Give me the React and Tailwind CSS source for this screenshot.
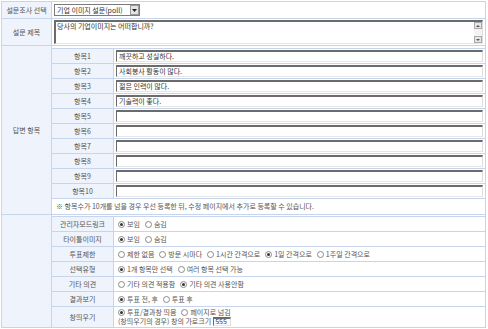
import React from 'react';

const items = [
  '깨끗하고 성실하다.',
  '사회봉사 활동이 많다.',
  '젊은 인력이 많다.',
  '기술력이 좋다.',
  '', '', '', '', '', '',
];

function Radio({ on }) {
  return (
    <span className="inline-flex items-center justify-center w-[7px] h-[7px] rounded-full border border-[#8a8a8a] bg-white mr-[2px] shrink-0">
      {on && <span className="w-[3px] h-[3px] rounded-full bg-[#333]" />}
    </span>
  );
}

function Choice({ on, label }) {
  return (
    <span className="inline-flex items-center mr-[5px]">
      <Radio on={on} />
      {label}
    </span>
  );
}

function TextBox({ value }) {
  return (
    <div className="h-[12px] flex-1 border-t-2 border-l border-[#6b6b6b] border-r border-r-[#ddd] border-b border-b-[#e6e6e6] bg-white flex items-center pl-[2px] text-[#333] leading-none">
      {value}
    </div>
  );
}

const options = [
  { label: '관리자모드링크', choices: [['보임', true], ['숨김', false]] },
  { label: '타이틀이미지', choices: [['보임', true], ['숨김', false]] },
  {
    label: '투표제한',
    choices: [['제한 없음', false], ['방문 시마다', false], ['1시간 간격으로', false], ['1일 간격으로', true], ['1주일 간격으로', false]],
  },
  { label: '선택유형', choices: [['1개 항목만 선택', true], ['여러 항목 선택 가능', false]] },
  { label: '기타 의견', choices: [['기타 의견 적용함', false], ['기타 의견 사용안함', true]] },
  { label: '결과보기', choices: [['투표 전, 후', true], ['투표 후', false]] },
];

export default function App() {
  return (
    <div className="w-[488px] h-[329px] bg-white pt-[1px] pl-[1px]" style={{ fontFamily: '"Noto Sans CJK KR", "Noto Sans", sans-serif' }}>
      <div className="w-[485px] border border-[#c6d4ec] text-[7px] text-[#555] leading-none">
        {/* 설문조사 선택 */}
        <div className="flex h-[17px] border-b border-[#c6d4ec]">
          <div className="w-[50px] bg-[#eef3fc] border-r border-[#c6d4ec] flex items-center justify-center">설문조사 선택</div>
          <div className="flex-1 flex items-center pl-[2px]">
            <div className="w-[86px] h-[12px] border border-[#7b7b7b] bg-white flex items-center justify-between pl-[2px] text-[#333]">
              <span>기업 이미지 설문(poll)</span>
              <span className="w-[9px] h-[10px] bg-[#e4e4e4] border border-[#999] flex items-center justify-center">
                <svg width="5" height="3" viewBox="0 0 5 3"><path d="M0 0h5L2.5 3z" fill="#222" /></svg>
              </span>
            </div>
          </div>
        </div>

        {/* 설문 제목 */}
        <div className="flex h-[27px] border-b border-[#c6d4ec]">
          <div className="w-[50px] bg-[#eef3fc] border-r border-[#c6d4ec] flex items-center justify-center">설문 제목</div>
          <div className="flex-1 flex items-center pl-[2px] pr-[2px]">
            <div className="flex-1 h-[24px] border-t-2 border-l-2 border-[#6b6b6b] border-r border-r-[#ddd] border-b border-b-[#e6e6e6] bg-white flex justify-between">
              <span className="pl-[1px] pt-[1px] text-[#333]">당사의 기업이미지는 어떠합니까?</span>
              <span className="w-[8px] bg-[#f3f3f3] flex flex-col justify-between">
                <span className="h-[7px] border border-[#aaa] bg-[#e6e6e6] flex items-center justify-center">
                  <svg width="4" height="2" viewBox="0 0 4 2"><path d="M0 2h4L2 0z" fill="#555" /></svg>
                </span>
                <span className="h-[7px] border border-[#aaa] bg-[#e6e6e6] flex items-center justify-center">
                  <svg width="4" height="2" viewBox="0 0 4 2"><path d="M0 0h4L2 2z" fill="#555" /></svg>
                </span>
              </span>
            </div>
          </div>
        </div>

        {/* 답변 항목 */}
        <div className="flex border-b border-[#c6d4ec]">
          <div className="w-[50px] bg-[#eef3fc] border-r border-[#c6d4ec] flex items-center justify-center">답변 항목</div>
          <div className="flex-1 pt-[2px]">
            <div className="border-t border-[#c6d4ec]">
              {items.map((v, i) => (
                <div key={i} className="flex h-[15px] border-b border-[#c6d4ec]">
                  <div className="w-[62px] bg-[#eef3fc] border-r border-[#c6d4ec] flex items-center justify-center">항목{i + 1}</div>
                  <div className="flex-1 flex items-center pl-[2px] pr-[2px]">
                    <TextBox value={v} />
                  </div>
                </div>
              ))}
              <div className="h-[15px] flex items-center pl-[4px]">
                ※ 항목수가 10개를 넘을 경우 우선 등록한 뒤, 수정 페이지에서 추가로 등록할 수 있습니다.
              </div>
            </div>
          </div>
        </div>

        {/* 옵션 */}
        <div className="flex">
          <div className="w-[50px] bg-[#eef3fc] border-r border-[#c6d4ec]" />
          <div className="flex-1 pt-[1px]">
            <div className="border-t border-[#c6d4ec]">
              {options.map((o) => (
                <div key={o.label} className="flex h-[15px] border-b border-[#c6d4ec]">
                  <div className="w-[62px] bg-[#eef3fc] border-r border-[#c6d4ec] flex items-center justify-center">{o.label}</div>
                  <div className="flex-1 flex items-center pl-[4px]">
                    {o.choices.map(([l, on]) => (
                      <Choice key={l} on={on} label={l} />
                    ))}
                  </div>
                </div>
              ))}
              <div className="flex h-[20px]">
                <div className="w-[62px] bg-[#eef3fc] border-r border-[#c6d4ec] flex items-center justify-center">창띄우기</div>
                <div className="flex-1 flex flex-col justify-center gap-[1px] pl-[4px]">
                  <div className="flex items-center">
                    <Choice on label="투표/결과창 띄움" />
                    <Choice on={false} label="페이지로 넘김" />
                  </div>
                  <div className="flex items-center">
                    (창띄우기의 경우) 창의 가로크기
                    <span className="ml-[2px] w-[18px] h-[9px] border-t-2 border-l border-[#6b6b6b] border-r border-r-[#ddd] border-b border-b-[#e6e6e6] bg-white flex items-center pl-[1px] text-[#333]">555</span>
                  </div>
                </div>
              </div>
            </div>
          </div>
        </div>
      </div>
    </div>
  );
}
